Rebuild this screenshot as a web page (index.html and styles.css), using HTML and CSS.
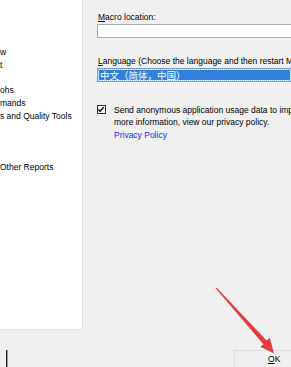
FILE: index.html
```html
<!DOCTYPE html>
<html lang="en">
<head>
	<meta charset="UTF-8">
	<title>Options</title>
	<link rel="stylesheet" href="styles.css">
</head>
<body>

<div class="dialog">
  <div class="main">
    <ul class="nav">
      <li>w</li>
      <li>t</li>
      <li class="gap"></li>
      <li>ohs</li>
      <li>mands</li>
      <li>s and Quality Tools</li>
      <li class="gap"></li>
      <li class="gap"></li>
      <li class="gap"></li>
      <li>Other Reports</li>
    </ul>

    <div class="page">
      <label class="label first"><u>M</u>acro location:</label>
      <div class="textbox"></div>

      <label class="label"><u>L</u>anguage (Choose the language and then restart M</label>
      <div class="select"><span class="selected">中文（简体，中国）</span></div>

      <div class="check-row">
        <span class="check">
          <svg width="9" height="9" viewBox="0 0 9 9"><path d="M1.5 4.5 L3.5 6.5 L7.5 2" fill="none" stroke="#000" stroke-width="1.6"/></svg>
        </span>
        <div class="check-text">
          Send anonymous application usage data to imp<br>
          more information, view our privacy policy.
          <a href="#" class="link">Privacy Policy</a>
        </div>
      </div>
    </div>
  </div>

  <div class="bottom">
    <span class="caret"></span>
    <button class="ok"><u>O</u>K</button>
  </div>
</div>

<svg class="arrow" width="291" height="367" viewBox="0 0 291 367">
  <polygon points="216.5,287.5 266.6,340.6 269.8,337.8 274,353.5 260.3,346.8 263.4,344.2 215.8,288.6" fill="#e23c40"/>
</svg>

</body>
</html>
```

FILE: styles.css
```css
*{
	margin: 0;
	padding: 0;
	box-sizing: border-box;
}
body{
	width: 291px;
	height: 367px;
	overflow: hidden;
	background: #f0f0f0;
	font-family: "Liberation Sans", Arial, sans-serif;
	font-size: 8.5px;
	color: #000;
	position: relative;
}
.dialog{
	display: flex;
	flex-direction: column;
	height: 100%;
}
.main{
	display: flex;
	height: 330px;
}
.nav{
	list-style: none;
	width: 83px;
	flex: none;
	background: #fff;
	border-right: 1px solid #e2e2e2;
	border-bottom: 1px solid #e2e2e2;
	padding-top: 46px;
	line-height: 12.8px;
	white-space: nowrap;
	overflow: hidden;
}
.nav li{
	height: 12.8px;
}
.page{
	flex: 1;
	padding-left: 14px;
	white-space: nowrap;
	min-width: 0;
	overflow: hidden;
}
.label{
	display: block;
	margin-top: 18px;
	padding-left: 1px;
	line-height: 11px;
}
.label.first{
	margin-top: 12px;
}
.textbox{
	height: 14px;
	margin-top: 1px;
	background: #fff;
	border: 1px solid #abadb3;
	border-right: none;
}
.select{
	height: 14px;
	margin-top: 1px;
	background: #fff;
	border: 1px solid #7a9ad0;
	border-right: none;
	padding: 1px;
}
.selected{
	display: block;
	height: 100%;
	background: #3380dc;
	color: #fff;
	font-family: "Noto Sans CJK SC", sans-serif;
	font-size: 9.5px;
	line-height: 10px;
	padding-left: 1px;
	outline: 1px dotted #9cc3f5;
}
.check-row{
	display: flex;
	margin-top: 22px;
}
.check{
	width: 9px;
	height: 9px;
	border: 1px solid #333;
	background: #fff;
	margin-top: 1px;
	flex: none;
	display: flex;
}
.check svg{
	margin: -1px 0 0 -1px;
}
.check-text{
	margin-left: 8px;
	line-height: 12px;
}
.link{
	display: block;
	color: #1f1fff;
	text-decoration: none;
	margin-top: 1px;
}
.bottom{
	flex: 1;
	display: flex;
	align-items: flex-end;
	justify-content: space-between;
	padding-top: 20px;
}
.caret{
	width: 2px;
	height: 17px;
	margin-left: 6px;
	border-left: 1px solid #222;
	border-right: 1px solid #9a9a9a;
}
.ok{
	width: 57px;
	height: 17px;
	border: 1px solid #dcdcdc;
	border-right: none;
	border-bottom: none;
	background: #f0f0f0;
	font-family: "Liberation Sans", Arial, sans-serif;
	font-size: 8.5px;
	color: #000;
	text-align: left;
	padding-left: 33px;
	padding-bottom: 0;
	line-height: 15px;
}
.arrow{
	position: absolute;
	left: 0;
	top: 0;
	pointer-events: none;
}
```
